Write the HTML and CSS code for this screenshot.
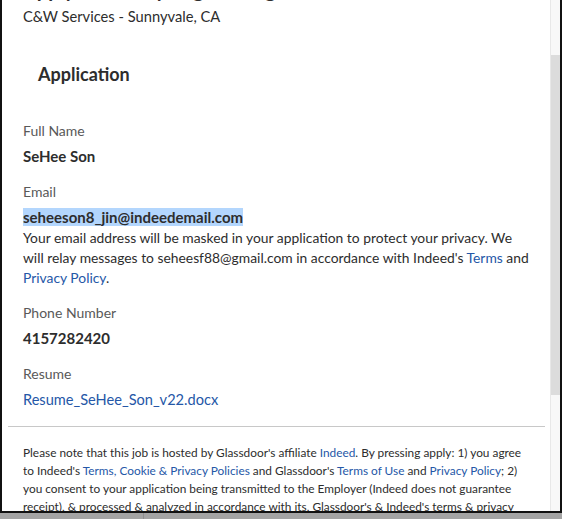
FILE: index.html
```html
<!DOCTYPE html>
<html lang="en">
<head>
<meta charset="utf-8">
<title>Application</title>
<link rel="stylesheet" href="styles.css">
</head>
<body>
<div class="modal">
  <div class="content">
    <h2 class="job-title">Apply to Facility Engineering Tech</h2>
    <p class="company">C&amp;W Services - Sunnyvale, CA</p>
    <h3 class="section-title">Application</h3>
    <div class="fields">
      <div class="field">
        <div class="label">Full Name</div>
        <div class="value">SeHee Son</div>
      </div>
      <div class="field">
        <div class="label">Email</div>
        <div class="value"><span class="selected">seheeson8_jin@indeedemail.com</span></div>
        <p class="note">Your email address will be masked in your application to protect your privacy. We will relay messages to seheesf88@gmail.com in accordance with Indeed's <a class="link" href="#">Terms</a> and <a class="link" href="#">Privacy Policy</a>.</p>
      </div>
      <div class="field">
        <div class="label">Phone Number</div>
        <div class="value">4157282420</div>
      </div>
      <div class="field">
        <div class="label">Resume</div>
        <div class="value"><a class="link file" href="#">Resume_SeHee_Son_v22.docx</a></div>
      </div>
    </div>
    <hr class="divider">
    <p class="legal">Please note that this job is hosted by Glassdoor's affiliate <a class="link" href="#">Indeed</a>. By pressing apply: 1) you agree to Indeed's <a class="link" href="#">Terms, Cookie &amp; Privacy Policies</a> and Glassdoor's <a class="link" href="#">Terms of Use</a> and <a class="link" href="#">Privacy Policy</a>; 2) you consent to your application being transmitted to the Employer (Indeed does not guarantee receipt), &amp; processed &amp; analyzed in accordance with its, Glassdoor's &amp; Indeed's terms &amp; privacy policies; and 3) you consent to receive communications.</p>
  </div>
  <div class="scrollbar"><div class="thumb"></div></div>
</div>
<div class="backdrop">
  <div class="backdrop-left"></div>
  <div class="backdrop-text">Weekly Pay</div>
</div>
</body>
</html>
```

FILE: styles.css
```css
html, body {
  margin: 0;
  padding: 0;
}
body {
  background: #a4a4a4;
  font-family: Lato, "Open Sans", "Liberation Sans", sans-serif;
  color: #2d2d2d;
  width: 562px;
  height: 519px;
  overflow: hidden;
}
.modal {
  box-sizing: border-box;
  width: 562px;
  height: 513px;
  background: #fff;
  border: 2px solid #111;
  border-top: none;
  display: flex;
  overflow: hidden;
}
.content {
  flex: 1;
  min-width: 0;
  overflow: hidden;
  padding: 0 15px 0 21px;
}
.job-title {
  margin: -23px 0 0;
  font-size: 20px;
  line-height: 24px;
  font-weight: 700;
  white-space: nowrap;
}
.company {
  margin: 5px 0 0;
  font-size: 14.7px;
  line-height: 20px;
}
.section-title {
  margin: 36px 0 0 15px;
  font-size: 18px;
  line-height: 24px;
  font-weight: 700;
}
.fields {
  display: flex;
  flex-direction: column;
  gap: 15px;
  margin-top: 35px;
}
.field {
  display: flex;
  flex-direction: column;
}
.label {
  font-size: 14px;
  line-height: 20px;
  color: #595959;
}
.value {
  margin-top: 4px;
  font-size: 15px;
  line-height: 22px;
  font-weight: 700;
}
.selected {
  background: #b3d6fd;
}
.note {
  margin: 0;
  font-size: 13.85px;
  line-height: 20px;
}
.link {
  color: #2557a7;
  text-decoration: none;
}
.file {
  font-weight: 400;
  font-size: 14.6px;
}
.divider {
  border: none;
  border-top: 1px solid #c8c8c8;
  margin: 15px -10px 0 -15px;
}
.legal {
  margin: 17px 7px 0 0;
  font-size: 11.85px;
  line-height: 18px;
}
.scrollbar {
  width: 10px;
  flex: none;
  background: #f8f8f8;
  border-left: 1px solid #e8e8e8;
  box-sizing: border-box;
}
.thumb {
  margin-top: 55px;
  height: 340px;
  background: #dcdcdc;
}
.backdrop {
  display: flex;
  height: 6px;
  overflow: hidden;
}
.backdrop-left {
  width: 143px;
  border-right: 1px solid #8e8e8e;
}
.backdrop-text {
  padding-left: 32px;
  margin-top: 2px;
  font-size: 16px;
  line-height: 20px;
  color: #555;
}
```
